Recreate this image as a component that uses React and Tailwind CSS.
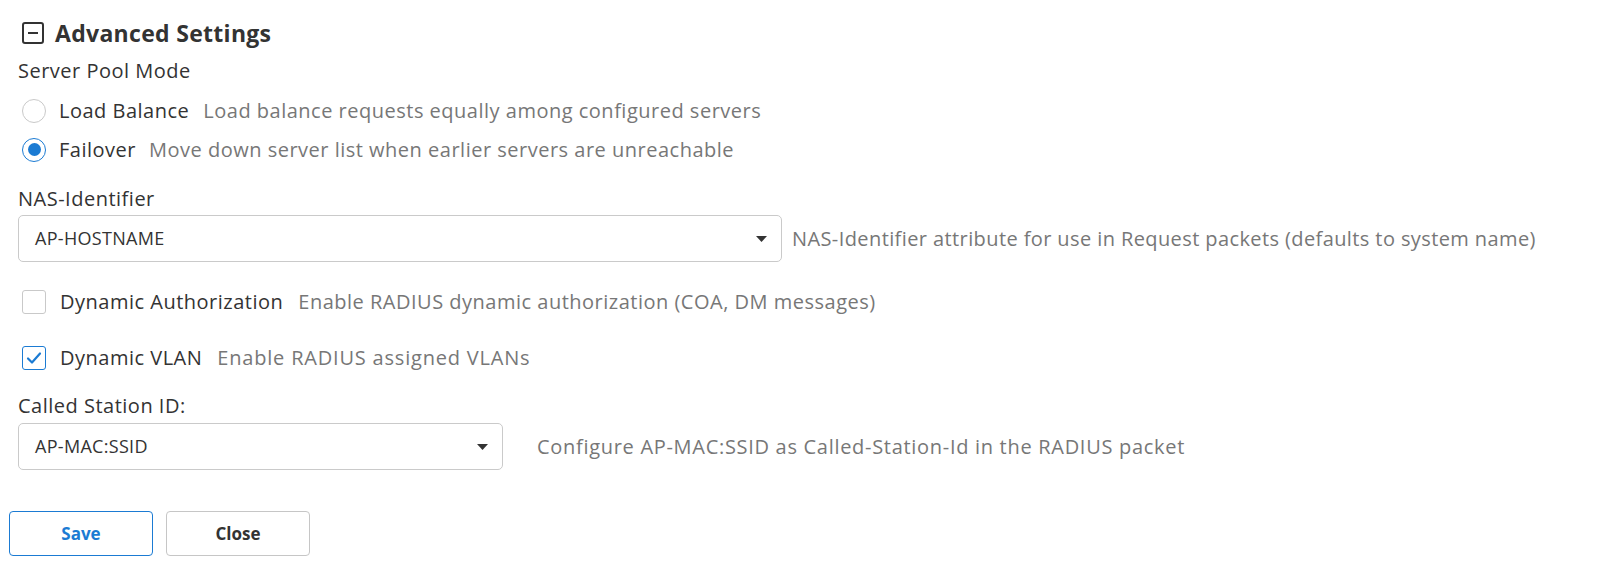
import { useState } from "react";

const FONT = { fontFamily: "'Open Sans', 'Noto Sans', sans-serif" };

function Radio({ checked, onClick }) {
  return (
    <button
      type="button"
      onClick={onClick}
      className={
        "flex h-[24px] w-[24px] shrink-0 items-center justify-center rounded-full border bg-white " +
        (checked ? "border-[#1b7bd3]" : "border-[#c9c9c9]")
      }
    >
      {checked && <span className="h-[13px] w-[13px] rounded-full bg-[#1b7bd3]" />}
    </button>
  );
}

function Checkbox({ checked, onClick }) {
  return (
    <button
      type="button"
      onClick={onClick}
      className={
        "flex h-[24px] w-[24px] shrink-0 items-center justify-center rounded-[3px] border bg-white " +
        (checked ? "border-[#1b7bd3]" : "border-[#c9c9c9]")
      }
    >
      {checked && (
        <svg width="16" height="14" viewBox="0 0 16 14" fill="none">
          <path d="M2 7.5 L6 11.5 L14 2.5" stroke="#1b7bd3" strokeWidth="2.2" strokeLinecap="round" strokeLinejoin="round" />
        </svg>
      )}
    </button>
  );
}

function Dropdown({ value, className }) {
  return (
    <div
      className={
        "flex h-[47px] shrink-0 items-center justify-between rounded-[5px] border border-[#cacaca] bg-white pl-[16px] pr-[14px] " +
        className
      }
    >
      <span className="text-[18px] tracking-[0.3px] text-[#333]">{value}</span>
      <svg width="11" height="6" viewBox="0 0 11 6">
        <path d="M0 0 H11 L5.5 6 Z" fill="#333" />
      </svg>
    </div>
  );
}

export default function App() {
  const [mode, setMode] = useState("failover");
  const [dynAuth, setDynAuth] = useState(false);
  const [dynVlan, setDynVlan] = useState(true);

  return (
    <div className="min-h-[570px] w-full bg-white pt-[20px]" style={FONT}>
      <div className="px-[18px] text-[20px] tracking-[0.5px]">
        <div className="flex h-[26px] items-center gap-[11px] pl-[4px]">
          <div className="flex h-[22px] w-[22px] items-center justify-center rounded-[3px] border-[2.5px] border-[#333]">
            <span className="h-[2px] w-[10px] bg-[#333]" />
          </div>
          <h2 className="text-[23px] font-bold leading-none tracking-[0.3px] text-[#333]">Advanced Settings</h2>
        </div>

        <div className="mt-[13px] leading-[24px] text-[#333]">Server Pool Mode</div>

        <div className="mt-[8px]">
          <div className="flex h-[39px] items-center pl-[4px]">
            <Radio checked={mode === "balance"} onClick={() => setMode("balance")} />
            <span className="ml-[13px] text-[#333]">Load Balance</span>
            <span className="ml-[14px] text-[#777]">Load balance requests equally among configured servers</span>
          </div>
          <div className="flex h-[39px] items-center pl-[4px]">
            <Radio checked={mode === "failover"} onClick={() => setMode("failover")} />
            <span className="ml-[13px] text-[#333]">Failover</span>
            <span className="ml-[13px] text-[#777]">Move down server list when earlier servers are unreachable</span>
          </div>
        </div>

        <div className="mt-[18px] leading-[24px] text-[#333]">NAS-Identifier</div>
        <div className="mt-[4px] flex items-center">
          <Dropdown value="AP-HOSTNAME" className="w-[764px] tracking-normal" />
          <span className="ml-[10px] tracking-[0.4px] text-[#777]">
            NAS-Identifier attribute for use in Request packets (defaults to system name)
          </span>
        </div>

        <div className="mt-[20px] flex h-[40px] items-center pl-[4px]">
          <Checkbox checked={dynAuth} onClick={() => setDynAuth(!dynAuth)} />
          <span className="ml-[14px] text-[#333]">Dynamic Authorization</span>
          <span className="ml-[15px] text-[#777]">Enable RADIUS dynamic authorization (COA, DM messages)</span>
        </div>
        <div className="mt-[16px] flex h-[40px] items-center pl-[4px]">
          <Checkbox checked={dynVlan} onClick={() => setDynVlan(!dynVlan)} />
          <span className="ml-[14px] text-[#333]">Dynamic VLAN</span>
          <span className="ml-[15px] tracking-[0.8px] text-[#777]">Enable RADIUS assigned VLANs</span>
        </div>

        <div className="mt-[16px] leading-[24px] text-[#333]">Called Station ID:</div>
        <div className="mt-[5px] flex items-center">
          <Dropdown value="AP-MAC:SSID" className="w-[485px] tracking-normal" />
          <span className="ml-[34px] tracking-[0.7px] text-[#777]">
            Configure AP-MAC:SSID as Called-Station-Id in the RADIUS packet
          </span>
        </div>
      </div>

      <div className="mt-[41px] flex gap-[13px] px-[9px]">
        <button
          type="button"
          className="h-[45px] w-[144px] rounded-[4px] border border-[#1b7bd3] bg-white text-[17px] font-bold text-[#1b7bd3]"
        >
          Save
        </button>
        <button
          type="button"
          className="h-[45px] w-[144px] rounded-[4px] border border-[#c6c6c6] bg-white text-[17px] font-bold text-[#333]"
        >
          Close
        </button>
      </div>
    </div>
  );
}
